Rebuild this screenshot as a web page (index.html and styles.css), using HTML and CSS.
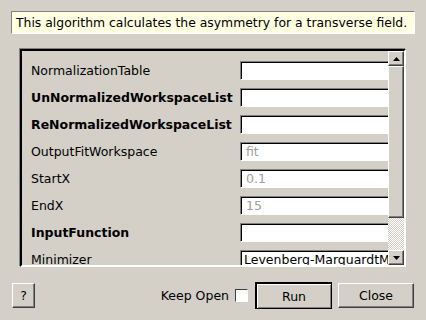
FILE: index.html
```html
<!DOCTYPE html>
<html lang="en">
<head>
  <meta charset="UTF-8">
  <title>Algorithm Dialog</title>
  <link rel="stylesheet" href="styles.css">
</head>
<body>
  <div class="dialog">
    <div class="desc">This algorithm calculates the asymmetry for a transverse field.</div>
    <div class="frame">
      <div class="rows">
        <div class="row"><span class="label">NormalizationTable</span><span class="field"></span></div>
        <div class="row"><span class="label bold">UnNormalizedWorkspaceList</span><span class="field"></span></div>
        <div class="row"><span class="label bold">ReNormalizedWorkspaceList</span><span class="field"></span></div>
        <div class="row"><span class="label">OutputFitWorkspace</span><span class="field hint">fit</span></div>
        <div class="row"><span class="label">StartX</span><span class="field hint">0.1</span></div>
        <div class="row"><span class="label">EndX</span><span class="field hint">15</span></div>
        <div class="row"><span class="label bold">InputFunction</span><span class="field"></span></div>
        <div class="row"><span class="label">Minimizer</span><span class="field combo">Levenberg-MarquardtMD</span></div>
      </div>
      <div class="scrollbar">
        <div class="sb-btn">
          <svg width="7" height="4" viewBox="0 0 7 4"><polygon points="3.5,0 7,4 0,4" fill="#000"/></svg>
        </div>
        <div class="sb-thumb"></div>
        <div class="sb-track"></div>
        <div class="sb-btn">
          <svg width="7" height="4" viewBox="0 0 7 4"><polygon points="0,0 7,0 3.5,4" fill="#000"/></svg>
        </div>
      </div>
    </div>
    <div class="actions">
      <button class="btn help">?</button>
      <div class="spacer"></div>
      <label class="keep">Keep Open <span class="check"></span></label>
      <button class="btn default">Run</button>
      <button class="btn close">Close</button>
    </div>
  </div>
</body>
</html>
```
FILE: styles.css
```css
body {
  margin: 0;
  background-color: #d4d0c8;
  font-family: "DejaVu Sans", sans-serif;
  font-size: 12.5px;
  color: #000;
}
.dialog {
  width: 426px;
  height: 320px;
  display: flex;
  flex-direction: column;
}
.desc {
  margin: 11px 11px 0 11px;
  height: 21px;
  line-height: 21px;
  padding: 0 4px;
  font-size: 12.4px;
  background-color: #ffffe1;
  border: 1px solid;
  border-color: #808080 #fff #fff #808080;
  white-space: nowrap;
  overflow: hidden;
}
.frame {
  margin: 15px 0 0 20px;
  width: 382px;
  height: 214px;
  display: flex;
  border: 2px solid;
  border-color: #000 #fff #fff #000;
  box-shadow: -1px -1px 0 #808080;
}
.rows {
  flex: 1;
  overflow: hidden;
  padding: 10px 0 0 9px;
  display: flex;
  flex-direction: column;
  gap: 8px;
}
.row {
  display: flex;
  align-items: center;
  height: 19px;
  flex-shrink: 0;
}
.label {
  width: 209px;
  flex-shrink: 0;
  white-space: nowrap;
}
.bold {
  font-weight: bold;
}
.field {
  width: 170px;
  flex-shrink: 0;
  height: 19px;
  box-sizing: border-box;
  background-color: #fff;
  border: 1px solid;
  border-color: #808080 #fff #fff #808080;
  box-shadow: inset 1px 1px 0 #000;
  padding: 1px 0 0 5px;
  line-height: 16px;
  white-space: nowrap;
  overflow: hidden;
}
.hint {
  color: #a0a0a0;
}
.combo {
  height: 20px;
  padding-left: 3px;
}
.scrollbar {
  width: 16px;
  flex-shrink: 0;
  display: flex;
  flex-direction: column;
}
.sb-btn,
.sb-thumb {
  box-sizing: border-box;
  background-color: #d4d0c8;
  border: 1px solid;
  border-color: #fff #404040 #404040 #fff;
  box-shadow: inset -1px -1px 0 #808080;
}
.sb-btn {
  height: 15px;
  display: flex;
  align-items: center;
  justify-content: center;
}
.sb-thumb {
  height: 152px;
}
.sb-track {
  height: 32px;
  background: repeating-conic-gradient(#d4d0c8 0 25%, #fff 0 50%) 0 0 / 2px 2px;
}
.actions {
  margin-top: 15px;
  padding: 0 12px;
  display: flex;
  align-items: center;
  height: 27px;
}
.spacer {
  flex: 1;
}
.btn {
  font-family: "DejaVu Sans", sans-serif;
  font-size: 12.5px;
  color: #000;
  background-color: #d4d0c8;
  border: 1px solid;
  border-color: #fff #404040 #404040 #fff;
  box-shadow: inset -1px -1px 0 #808080;
  height: 25px;
  padding: 0;
}
.help {
  width: 23px;
}
.keep {
  display: flex;
  align-items: center;
}
.check {
  display: inline-block;
  width: 11px;
  height: 11px;
  margin-left: 6px;
  background-color: #fff;
  border: 1px solid;
  border-color: #404040 #fff #fff #404040;
}
.default {
  width: 77px;
  height: 27px;
  margin-left: 7px;
  border-width: 2px 1px 1px 2px;
  border-color: #000;
  border-style: solid;
  box-shadow: inset 1px 1px 0 #fff, inset -1px -1px 0 #808080;
}
.close {
  width: 76px;
  margin-left: 6px;
}
```
